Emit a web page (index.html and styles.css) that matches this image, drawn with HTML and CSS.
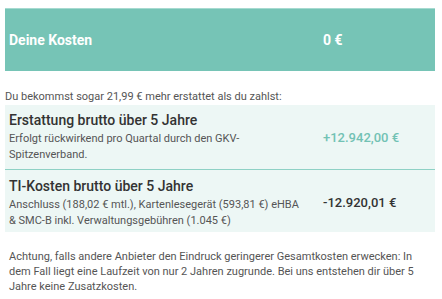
FILE: index.html
```html
<!DOCTYPE html>
<html lang="de">
<head>
<meta charset="utf-8">
<link rel="stylesheet" href="styles.css">
</head>
<body>
<div class="wrap">
  <div class="header row">
    <div class="h-label">Deine Kosten</div>
    <div class="h-value">0 €</div>
  </div>
  <p class="intro">Du bekommst sogar 21,99 € mehr erstattet als du zahlst:</p>
  <div class="card row">
    <div>
      <div class="c-title">Erstattung brutto über 5 Jahre</div>
      <div class="c-sub">Erfolgt rückwirkend pro Quartal durch den GKV-Spitzenverband.</div>
    </div>
    <div class="c-value pos">+12.942,00 €</div>
  </div>
  <div class="card row second">
    <div>
      <div class="c-title">TI-Kosten brutto über 5 Jahre</div>
      <div class="c-sub">Anschluss (188,02 € mtl.), Kartenlesegerät (593,81 €) eHBA &amp; SMC-B inkl. Verwaltungsgebühren (1.045 €)</div>
    </div>
    <div class="c-value neg">-12.920,01 €</div>
  </div>
  <p class="note">Achtung, falls andere Anbieter den Eindruck geringerer Gesamtkosten erwecken: In dem Fall liegt eine Laufzeit von nur 2 Jahren zugrunde. Bei uns entstehen dir über 5 Jahre keine Zusatzkosten.</p>
</div>
</body>
</html>
```

FILE: styles.css
```css
html, body {
  margin: 0;
  padding: 0;
  background: #ffffff;
}
body {
  font-family: Roboto, "Liberation Sans", sans-serif;
  color: #555555;
}
.wrap {
  width: 430px;
  margin: 8px 0 0 5px;
}
.row {
  display: grid;
  grid-template-columns: 296px 108px;
  column-gap: 18px;
  align-items: center;
  padding: 0 4px;
}
.header {
  height: 62px;
  background: #76c4b6;
  border-top: 1px solid #a6dad0;
  color: #ffffff;
  font-size: 14px;
  font-weight: 700;
}
.intro {
  margin: 18px 0 0 0;
  font-size: 11px;
  line-height: 16px;
}
.card {
  background: #edf7f5;
  padding-top: 6px;
  padding-bottom: 6px;
}
.card.second {
  border-top: 1px solid #8fd1c5;
  padding-top: 7px;
  padding-bottom: 4px;
}
.c-title {
  font-size: 14px;
  font-weight: 500;
  line-height: 18px;
  color: #333333;
}
.c-sub {
  margin-top: 2px;
  font-size: 11px;
  line-height: 16px;
  color: #555555;
}
.second .c-sub {
  line-height: 15.5px;
}
.c-value {
  font-size: 13px;
  font-weight: 500;
}
.pos {
  color: #72c2b4;
}
.neg {
  color: #333333;
}
.note {
  margin: 17px 0 0 0;
  padding: 0 4px;
  font-size: 11px;
  line-height: 15px;
}
```
